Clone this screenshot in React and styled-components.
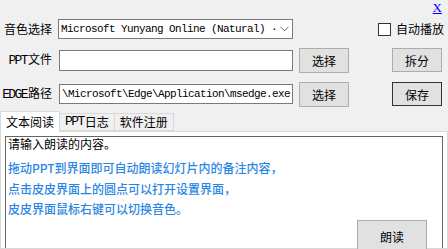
import styled, { createGlobalStyle } from "styled-components";

const GlobalStyle = createGlobalStyle`
  html, body {
    margin: 0;
    padding: 0;
  }
  body {
    background: #f0f0f0;
    font-family: "Noto Sans CJK SC", "Microsoft YaHei", sans-serif;
    font-size: 12px;
    color: #000;
  }
`;

const Window = styled.div`
  width: 448px;
  height: 249px;
  overflow: hidden;
  display: flex;
  flex-direction: column;
`;

const TopBar = styled.div`
  height: 19px;
  display: flex;
  justify-content: flex-end;
  padding-right: 6px;
`;

const CloseLink = styled.a`
  font-family: "Liberation Serif", serif;
  font-size: 13px;
  line-height: 13px;
  margin-top: 1px;
  color: #0000ff;
  text-decoration: underline;
  cursor: pointer;
`;

const Row = styled.div`
  display: flex;
  align-items: center;
  height: ${(p) => p.$h}px;
  margin-top: ${(p) => p.$mt || 0}px;
`;

const Label = styled.div`
  width: 52px;
  margin-right: 6px;
  text-align: right;
  white-space: nowrap;
  line-height: 14px;
`;

const Latin = styled.span`
  font-family: "Liberation Mono", monospace;
  font-size: 13px;
  letter-spacing: -1.6px;
  margin-right: 1px;
`;

const Select = styled.div`
  width: 235px;
  height: 20px;
  box-sizing: border-box;
  border: 1px solid #7a7a7a;
  background: #fff;
  display: flex;
  align-items: center;
  padding: 0 3px 0 2px;
  font-family: "Liberation Mono", monospace;
  font-size: 11px;
  letter-spacing: -0.6px;
  white-space: nowrap;
  overflow: hidden;
`;

const SelectText = styled.span`
  flex: 1;
  overflow: hidden;
`;

const Input = styled.div`
  width: 234px;
  height: ${(p) => p.$h}px;
  margin-left: 1px;
  box-sizing: border-box;
  border: 1px solid #7a7a7a;
  background: #fff;
  display: flex;
  align-items: center;
  padding-left: 2px;
  font-family: "Liberation Mono", monospace;
  font-size: 11px;
  letter-spacing: -0.6px;
  white-space: nowrap;
  overflow: hidden;
`;

const Button = styled.button`
  width: 50px;
  height: ${(p) => p.$h || 25}px;
  margin-left: ${(p) => (p.$right ? "auto" : "6px")};
  margin-right: ${(p) => (p.$right ? "6px" : "0")};
  box-sizing: border-box;
  background: #e1e1e1;
  border: 1px solid ${(p) => (p.$default ? "#333" : "#adadad")};
  font-family: "Noto Sans CJK SC", sans-serif;
  font-size: 12px;
  padding: 0;
  color: #000;
`;

const CheckGroup = styled.label`
  margin-left: auto;
  margin-right: 4px;
  display: flex;
  align-items: center;
  gap: 5px;
  line-height: 14px;
`;

const Box = styled.span`
  width: 13px;
  height: 13px;
  box-sizing: border-box;
  border: 1px solid #333;
  background: #fff;
`;

const TabStrip = styled.div`
  display: flex;
  align-items: flex-end;
  height: 20px;
  margin-top: 4px;
  position: relative;
  z-index: 1;
`;

const Tab = styled.div`
  height: ${(p) => (p.$active ? 21 : 18)}px;
  box-sizing: border-box;
  padding: 0 ${(p) => p.$pad}px;
  border: 1px solid #d9d9d9;
  border-bottom: ${(p) => (p.$active ? "none" : "1px solid #d9d9d9")};
  border-left: ${(p) => (p.$first || p.$active ? "1px solid #d9d9d9" : "none")};
  background: ${(p) => (p.$active ? "#fff" : "#f0f0f0")};
  margin-bottom: ${(p) => (p.$active ? -1 : 0)}px;
  display: flex;
  align-items: center;
  white-space: nowrap;
  line-height: 14px;
`;

const Panel = styled.div`
  flex: 1;
  display: flex;
  background: #fff;
  border: 1px solid #d9d9d9;
  padding: 4px 4px 0 4px;
`;

const TextBox = styled.div`
  flex: 1;
  position: relative;
  border: 1px solid #646464;
  border-bottom: none;
  background: #fff;
  padding: 0 2px;
`;

const Prompt = styled.div`
  line-height: 12px;
  margin-top: 1px;
`;

const Hint = styled.div`
  margin-top: 8px;
  color: #2a86e4;
  line-height: 20.5px;
  font-weight: 500;
`;

const ReadButton = styled.button`
  position: absolute;
  right: 15px;
  top: 83px;
  width: 70px;
  height: 32px;
  box-sizing: border-box;
  background: #e1e1e1;
  border: 1px solid #adadad;
  font-family: "Noto Sans CJK SC", sans-serif;
  font-size: 12px;
  padding: 0;
  color: #000;
`;

function Chevron() {
  return (
    <svg width="9" height="6" viewBox="0 0 9 6">
      <path d="M0.5 0.8 L4.5 4.8 L8.5 0.8" fill="none" stroke="#666" strokeWidth="1" />
    </svg>
  );
}

export default function App() {
  return (
    <Window>
      <GlobalStyle />
      <TopBar>
        <CloseLink>X</CloseLink>
      </TopBar>
      <Row $h={20}>
        <Label>音色选择</Label>
        <Select>
          <SelectText>Microsoft Yunyang Online (Natural) ·</SelectText>
          <Chevron />
        </Select>
        <CheckGroup>
          <Box />
          自动播放
        </CheckGroup>
      </Row>
      <Row $h={26} $mt={8}>
        <Label>
          <Latin>PPT</Latin>文件
        </Label>
        <Input $h={21} />
        <Button>选择</Button>
        <Button $right $h={24}>拆分</Button>
      </Row>
      <Row $h={26} $mt={8}>
        <Label>
          <Latin>EDGE</Latin>路径
        </Label>
        <Input $h={20}>\Microsoft\Edge\Application\msedge.exe</Input>
        <Button>选择</Button>
        <Button $right $default $h={24}>保存</Button>
      </Row>
      <TabStrip>
        <Tab $active $first $pad={5}>文本阅读</Tab>
        <Tab $pad={5}>
          <Latin>PPT</Latin>日志
        </Tab>
        <Tab $pad={5}>软件注册</Tab>
      </TabStrip>
      <Panel>
        <TextBox>
          <Prompt>请输入朗读的内容。</Prompt>
          <Hint>
            拖动PPT到界面即可自动朗读幻灯片内的备注内容，
            <br />
            点击皮皮界面上的圆点可以打开设置界面，
            <br />
            皮皮界面鼠标右键可以切换音色。
          </Hint>
          <ReadButton>朗读</ReadButton>
        </TextBox>
      </Panel>
    </Window>
  );
}
